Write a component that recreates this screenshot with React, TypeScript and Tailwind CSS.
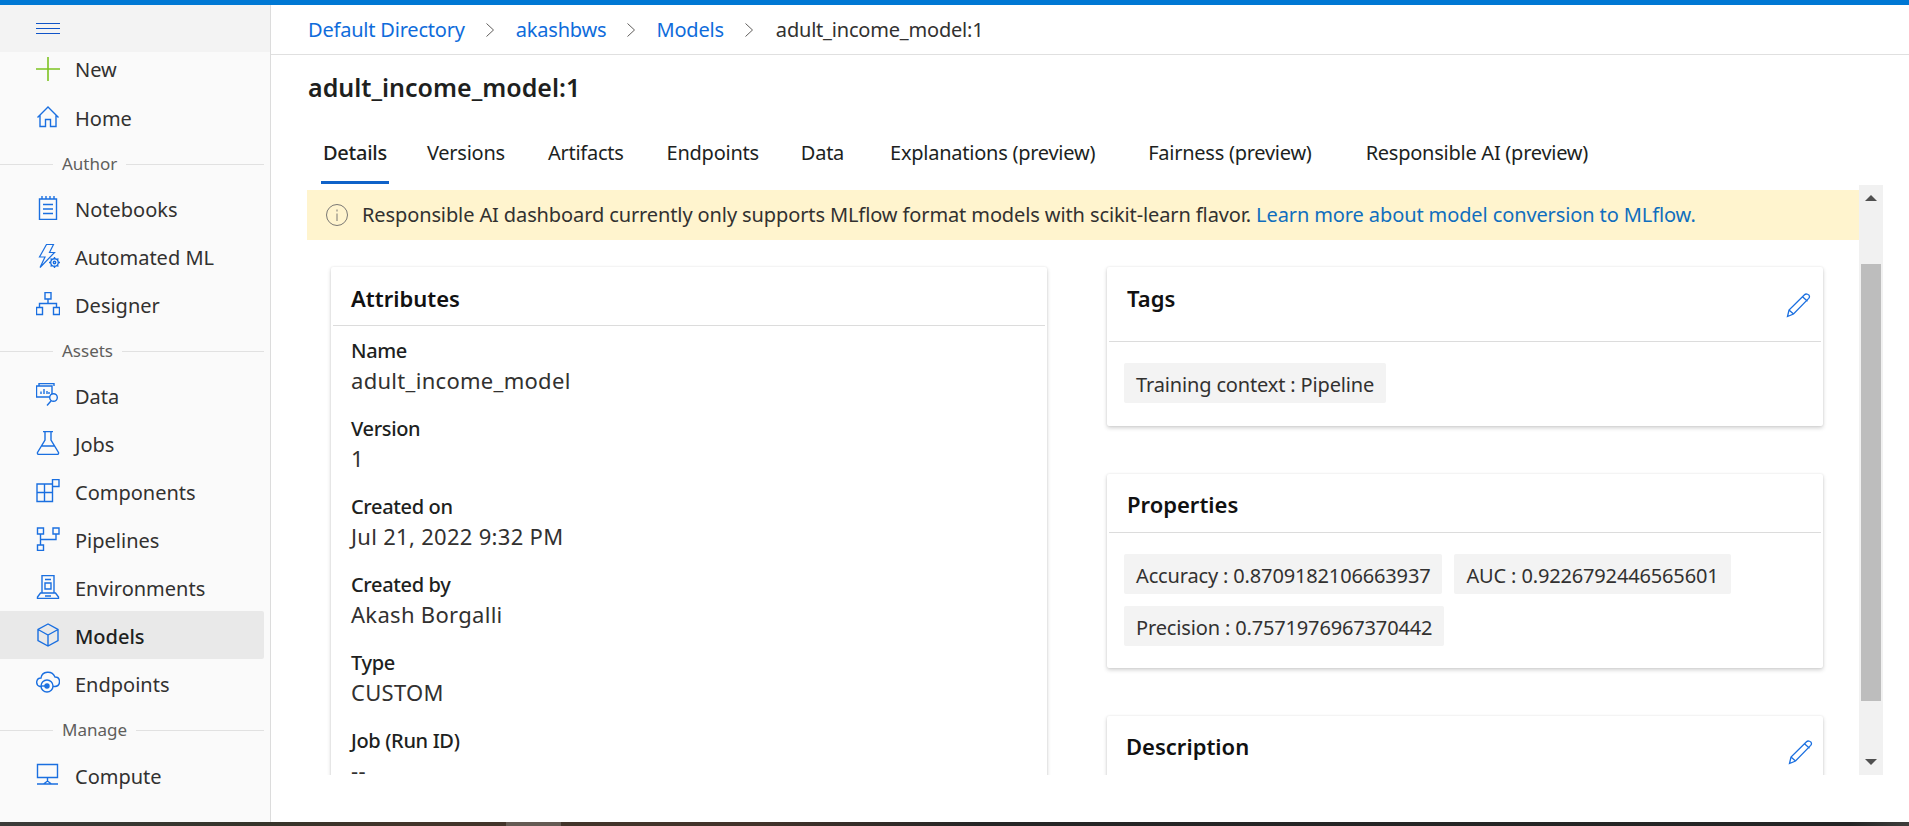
import type { ReactNode } from "react";

const FONT = "font-['Noto_Sans','Open_Sans',sans-serif]";

function Icon({ children, color = "#1a6fe0" }: { children: ReactNode; color?: string }) {
  return (
    <svg
      width="24"
      height="24"
      viewBox="0 0 24 24"
      fill="none"
      stroke={color}
      strokeWidth="1.4"
      className="shrink-0"
    >
      {children}
    </svg>
  );
}

const PlusIcon = () => (
  <Icon color="#7ec322">
    <path d="M12 0v24M0 12h24" strokeWidth="1.6" />
  </Icon>
);
const HomeIcon = () => (
  <Icon>
    <path d="M1.500 12.500 12 2l10.500 10.500M4 10.500V21.500h5.500v-7h5v7H20V10.500" />
  </Icon>
);
const NotebookIcon = () => (
  <Icon>
    <path d="M3.500 3h17v20.500h-17zM7 8.500h10M7 13h10M7 17.500h10M6 0v3M10 0v3M14 0v3M18 0v3" />
  </Icon>
);
const BoltGearIcon = () => (
  <Icon>
    <path d="M10.500 0.500h7l-4 8h5L4 23.500l5-10.500H3.500z" strokeWidth="1.2" />
    <circle cx="18.500" cy="18.500" r="3.800" fill="#fafafa" />
    <circle cx="18.500" cy="18.500" r="1.200" />
    <path d="M18.500 13v2M18.500 22v2M13 18.500h2M22 18.500h2M14.600 14.600l1.400 1.400M21 21l1.400 1.400M22.400 14.600 21 16M16 21l-1.400 1.400" />
  </Icon>
);
const DesignerIcon = () => (
  <Icon>
    <path d="M9 0.500h6v6.500H9zM0.500 15.500h6v7h-6zM17.500 15.500h6v7h-6zM12 7v4.500M3.500 15.500v-4h17v4" />
  </Icon>
);
const DataIcon = () => (
  <Icon>
    <path d="M3 3V0.500h15V3M0.500 3h15.500v11H0.500zM5 11V8.500M8 11V6M11 11V8M13 11V9" />
    <circle cx="17.500" cy="14.500" r="3.800" fill="#fafafa" />
    <path d="M15 18 11 22.500" />
  </Icon>
);
const FlaskIcon = () => (
  <Icon>
    <path d="M7 0.500h10M9 0.500v8.500l-7.500 12.500a1.500 1.500 0 0 0 1.300 2h18.400a1.500 1.500 0 0 0 1.300-2L15 9V0.500M6 15h12" />
  </Icon>
);
const ComponentsIcon = () => (
  <Icon>
    <path d="M1 5h15.500v17.500H1zM1 13.500h15.500M8.500 5v17.500M16.500 0.500h6.500v7h-6.500z" />
  </Icon>
);
const PipelinesIcon = () => (
  <Icon>
    <path d="M1.500 1h6v6h-6zM17 1h6v6h-6zM1.500 18h6v5.500h-6zM4.500 7v11M4.500 12.500h15.500V7" />
  </Icon>
);
const EnvironmentIcon = () => (
  <Icon>
    <path d="M6 18V0.500h12V18M9 4.500h6M9 8h6v6H9zM1.500 23.500V22l3-4h15l3 4v1.500zM9 21h6" />
  </Icon>
);
const CubeIcon = () => (
  <Icon>
    <path d="M12 1 2 6.500v11L12 23l10-5.500v-11zM2 6.500 12 12l10-5.500M12 12v11" />
  </Icon>
);
const EndpointIcon = () => (
  <Icon>
    <path d="M6 15.500H4C-1 14 0 7 5 7c1-7 11-8 14-1 6 0 6 9 0 9.500h-2" />
    <circle cx="11" cy="15" r="6" />
    <circle cx="11" cy="15" r="2" fill="#1a6fe0" />
    <path d="M5 15h4" />
  </Icon>
);
const ComputeIcon = () => (
  <Icon>
    <path d="M1.500 1.500h20v13h-20zM11.500 14.500v4M1 21h21M7.500 21l4-3 4 3" />
  </Icon>
);
const PencilIcon = () => (
  <svg width="25" height="25" viewBox="0 0 25 25" fill="none" stroke="#1a6fe0" strokeWidth="1.300" className="shrink-0">
    <path d="M1.500 23.500 3 17 18.500 1.700c1.500-1.400 5-.4 5 1.800 0 .8-.3 1.300-.8 1.900L7.500 21zM3 17l4.500 4M16.500 3.700l5 4.600" />
  </svg>
);

function SectionLabel({ label, tall }: { label: string; tall?: boolean }) {
  return (
    <div className={`flex items-center pt-[3px] pr-[6px] ${tall ? "h-[44px]" : "h-[43px]"}`}>
      <div className="h-px w-[53px] bg-[#e1e1e1]" />
      <span className="-mt-[1px] px-[9px] text-[17px] text-[#605e5c]">{label}</span>
      <div className="h-px flex-1 bg-[#e1e1e1]" />
    </div>
  );
}

function NavItem({ icon, label, active }: { icon: ReactNode; label: string; active?: boolean }) {
  return (
    <div
      className={`mr-[6px] flex h-[48px] items-center gap-[15px] rounded-r-[2px] pl-[36px] text-[20px] ${
        active ? "bg-[#e9e9e9] font-medium text-[#201f1e]" : "text-[#323130]"
      }`}
    >
      {icon}
      <span className="pt-[3px]">{label}</span>
    </div>
  );
}

function Sidebar() {
  return (
    <aside className="flex w-[271px] shrink-0 flex-col border-r border-[#dcdcdc] bg-[#fafafa]">
      <div className="flex h-[47px] items-center bg-[#f3f3f3] pl-[36px]">
        <div className="flex w-[24px] flex-col gap-[4px]">
          <div className="h-px bg-[#0f54c8]" />
          <div className="h-px bg-[#0f54c8]" />
          <div className="h-px bg-[#0f54c8]" />
        </div>
      </div>
      <div className="flex h-[41px] items-center gap-[15px] pb-[7px] pl-[36px] text-[20px] text-[#323130]">
        <PlusIcon />
        <span className="pt-[1px]">New</span>
      </div>
      <NavItem icon={<HomeIcon />} label="Home" />
      <SectionLabel label="Author" />
      <NavItem icon={<NotebookIcon />} label="Notebooks" />
      <NavItem icon={<BoltGearIcon />} label="Automated ML" />
      <NavItem icon={<DesignerIcon />} label="Designer" />
      <SectionLabel label="Assets" />
      <NavItem icon={<DataIcon />} label="Data" />
      <NavItem icon={<FlaskIcon />} label="Jobs" />
      <NavItem icon={<ComponentsIcon />} label="Components" />
      <NavItem icon={<PipelinesIcon />} label="Pipelines" />
      <NavItem icon={<EnvironmentIcon />} label="Environments" />
      <NavItem icon={<CubeIcon />} label="Models" active />
      <NavItem icon={<EndpointIcon />} label="Endpoints" />
      <SectionLabel label="Manage" tall />
      <NavItem icon={<ComputeIcon />} label="Compute" />
    </aside>
  );
}

const Chevron = () => (
  <svg width="10" height="16" viewBox="0 0 10 16" fill="none" stroke="#605e5c" strokeWidth="1" className="mx-[20px] shrink-0">
    <path d="m1.500 1.500 7 6.500-7 6.500" />
  </svg>
);

function Breadcrumb() {
  return (
    <div className="flex h-[50px] shrink-0 items-center border-b border-[#e0e0e0] pl-[37px] text-[20px] tracking-[-0.2px]">
      <span className="text-[#0f6cdb]">Default Directory</span>
      <Chevron />
      <span className="ml-[1px] text-[#0f6cdb]">akashbws</span>
      <Chevron />
      <span className="text-[#0f6cdb]">Models</span>
      <Chevron />
      <span className="ml-[2px] text-[#323130]">adult_income_model:1</span>
    </div>
  );
}

function Tabs() {
  return (
    <div className="ml-[50px] flex h-[61px] items-stretch text-[20px] tracking-[-0.25px] text-[#201f1e]">
      <div className="flex items-center border-b-[3px] border-[#0f62c9] px-[2px] pt-[2px] font-medium">Details</div>
      <div className="ml-[38px] flex items-center pb-[1px]">Versions</div>
      <div className="ml-[43px] flex items-center pb-[1px]">Artifacts</div>
      <div className="ml-[43px] flex items-center pb-[1px]">Endpoints</div>
      <div className="ml-[42px] flex items-center pb-[1px]">Data</div>
      <div className="ml-[46px] flex items-center pb-[1px]">Explanations (preview)</div>
      <div className="ml-[53px] flex items-center pb-[1px]">Fairness (preview)</div>
      <div className="ml-[54px] flex items-center pb-[1px]">Responsible AI (preview)</div>
    </div>
  );
}

function Card({ children }: { children: ReactNode }) {
  return (
    <div className="rounded-[2px] bg-white shadow-[0_2px_4px_rgba(0,0,0,0.18),0_0_2px_rgba(0,0,0,0.1)]">{children}</div>
  );
}

function Attribute({ label, value }: { label: string; value: string }) {
  return (
    <div className="mb-[19px]">
      <div className="h-[30px] text-[20px] leading-[30px] font-medium tracking-[-0.35px] text-[#201f1e]">{label}</div>
      <div className="-mt-[1px] h-[30px] text-[22px] leading-[30px] tracking-[0.3px] text-[#323130]">{value}</div>
    </div>
  );
}

function Chip({ text }: { text: string }) {
  return (
    <span className="flex h-[40px] items-center rounded-[2px] bg-[#f3f3f3] px-[12px] pt-[3px] text-[20px] tracking-[-0.15px] text-[#323130]">
      {text}
    </span>
  );
}

function RightColumn() {
  return (
    <div className="flex w-[716px] flex-col gap-[48px]">
      <Card>
        <div className="flex h-[74px] justify-between pt-[16px] pr-[12px] pl-[20px]">
          <span className="h-[30px] text-[22px] leading-[30px] font-semibold text-[#111]">Tags</span>
          <div className="pt-[10px]">
            <PencilIcon />
          </div>
        </div>
        <div className="mx-[2px] h-px bg-[#dcdcdc]" />
        <div className="flex flex-wrap gap-[12px] px-[17px] pt-[21px] pb-[23px]">
          <Chip text="Training context : Pipeline" />
        </div>
      </Card>
      <Card>
        <div className="flex h-[58px] pt-[15px] pl-[20px]">
          <span className="h-[30px] text-[22px] leading-[30px] font-semibold text-[#111]">Properties</span>
        </div>
        <div className="mx-[2px] h-px bg-[#dcdcdc]" />
        <div className="flex flex-wrap gap-[12px] px-[17px] pt-[21px] pb-[22px]">
          <Chip text="Accuracy : 0.8709182106663937" />
          <Chip text="AUC : 0.9226792446565601" />
          <Chip text="Precision : 0.7571976967370442" />
        </div>
      </Card>
      <Card>
        <div className="flex h-[73px] justify-between pt-[13px] pr-[10px] pl-[19px]">
          <span className="h-[34px] text-[22px] leading-[34px] font-semibold text-[#111]">Description</span>
          <div className="pt-[11px]">
            <PencilIcon />
          </div>
        </div>
      </Card>
    </div>
  );
}

function Scrollbar() {
  return (
    <div className="flex h-full w-[24px] shrink-0 flex-col bg-[#f1f1f1]">
      <div className="flex h-[79px] justify-center pt-[10px]">
        <div className="h-0 w-0 border-x-[6px] border-b-[6px] border-x-transparent border-b-[#505050]" />
      </div>
      <div className="mx-[2px] h-[437px] bg-[#bdbdbd]" />
      <div className="flex flex-1 items-end justify-center pb-[10px]">
        <div className="h-0 w-0 border-x-[6px] border-t-[6px] border-x-transparent border-t-[#505050]" />
      </div>
    </div>
  );
}

function Content() {
  return (
    <div className="ml-[36px] flex h-[590px] w-[1576px] overflow-hidden">
      <div className="min-w-0 flex-1 pt-[5px]">
        <div className="flex h-[50px] items-center bg-[#fff4ce] pl-[18px] text-[20px] tracking-[-0.11px] text-[#323130]">
          <svg width="24" height="24" viewBox="0 0 24 24" fill="none" stroke="#7a7874" strokeWidth="1" className="mr-[13px] shrink-0">
            <circle cx="12" cy="12" r="10.500" />
            <path d="M12 10.500V18M12 6.500v2" />
          </svg>
          <span>
            Responsible AI dashboard currently only supports MLflow format models with scikit-learn flavor.{" "}
            <span className="text-[#106ebe]">Learn more about model conversion to MLflow.</span>
          </span>
        </div>
        <div className="mt-[27px] flex gap-[60px] pl-[24px]">
          <div className="w-[716px]">
            <Card>
              <div className="h-[58px] pt-[16px] pl-[20px]">
                <span className="block h-[30px] text-[22px] leading-[30px] font-semibold text-[#111]">Attributes</span>
              </div>
              <div className="mx-[2px] h-px bg-[#dcdcdc]" />
              <div className="pt-[10px] pl-[20px]">
                <Attribute label="Name" value="adult_income_model" />
                <Attribute label="Version" value="1" />
                <Attribute label="Created on" value="Jul 21, 2022 9:32 PM" />
                <Attribute label="Created by" value="Akash Borgalli" />
                <Attribute label="Type" value="CUSTOM" />
                <Attribute label="Job (Run ID)" value="--" />
              </div>
            </Card>
          </div>
          <RightColumn />
        </div>
      </div>
      <Scrollbar />
    </div>
  );
}

export default function App() {
  return (
    <div className={`flex h-[826px] w-[1909px] flex-col overflow-hidden bg-white ${FONT}`}>
      <div className="h-[5px] shrink-0 bg-[#0078d4]" />
      <div className="flex min-h-0 flex-1">
        <Sidebar />
        <main className="min-w-0 flex-1">
          <Breadcrumb />
          <h1 className="mt-[15px] ml-[37px] h-[34px] text-[25px] leading-[34px] font-semibold text-[#201f1e]">
            adult_income_model:1
          </h1>
          <div className="mt-[19px]">
            <Tabs />
          </div>
          <div className="mt-[1px]">
            <Content />
          </div>
        </main>
      </div>
      <div className="h-[4px] shrink-0 bg-[linear-gradient(90deg,#3b3b39_0,#35332a_250px,#42342a_400px,#42342a_506px,#645a53_506px,#645a53_561px,#42342a_561px,#42322a_760px,#252525_980px,#242424_1850px,#3e3e3c_1909px)]" />
    </div>
  );
}
